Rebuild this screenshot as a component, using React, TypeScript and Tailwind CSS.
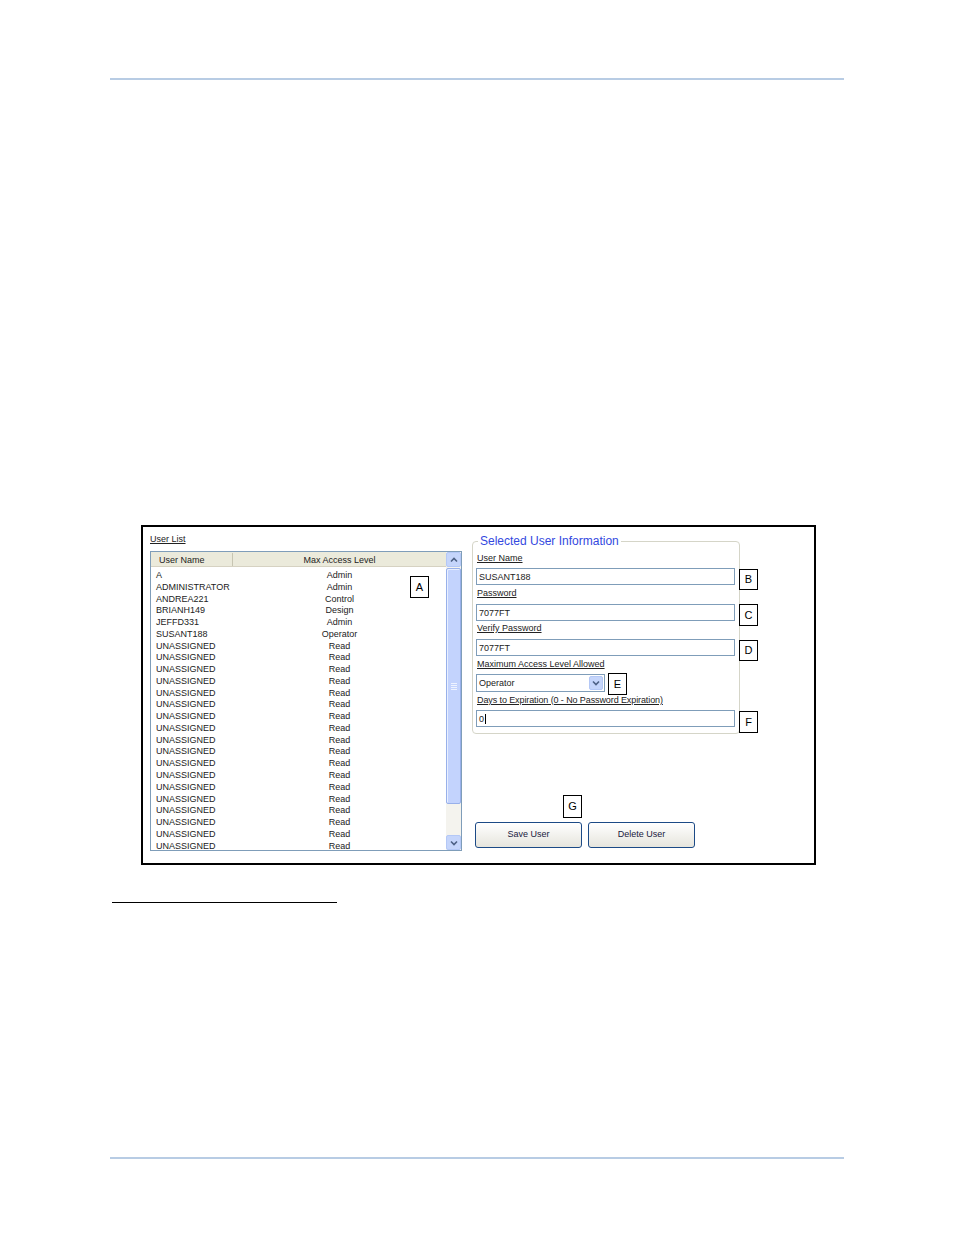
import React from "react";

const users: [string, string][] = [
  ["A", "Admin"],
  ["ADMINISTRATOR", "Admin"],
  ["ANDREA221", "Control"],
  ["BRIANH149", "Design"],
  ["JEFFD331", "Admin"],
  ["SUSANT188", "Operator"],
  ...Array.from({ length: 18 }, () => ["UNASSIGNED", "Read"] as [string, string]),
];

function Chevron({ up = false }: { up?: boolean }) {
  return (
    <svg width="8" height="6" viewBox="0 0 8 6" className="block">
      <path
        d={up ? "M1 4.5 L4 1.5 L7 4.5" : "M1 1.5 L4 4.5 L7 1.5"}
        fill="none"
        stroke="#4d6185"
        strokeWidth="1.6"
      />
    </svg>
  );
}

function Callout({ letter, cls }: { letter: string; cls: string }) {
  return (
    <div
      className={`absolute flex items-center justify-center border border-black bg-white text-[11px] text-black ${cls}`}
    >
      {letter}
    </div>
  );
}

function Field({ value, caret = false }: { value: string; caret?: boolean }) {
  return (
    <div className="flex h-[17px] w-[259px] items-center border border-[#7f9db9] bg-white pl-[2px] text-[9px] leading-[12px] text-[#222222]">
      {value}
      {caret && <span className="ml-[1px] inline-block h-[10px] w-[1px] bg-black" />}
    </div>
  );
}

function Label({ text, cls = "" }: { text: string; cls?: string }) {
  return (
    <div className={`h-[12px] pl-[1px] text-[9px] leading-[12px] text-[#222222] underline ${cls}`}>
      {text}
    </div>
  );
}

export default function App() {
  return (
    <div
      className="flex h-[1235px] w-[954px] flex-col bg-white"
      style={{ fontFamily: '"Liberation Sans", Arial, sans-serif' }}
    >
      <div className="ml-[110px] mt-[78px] h-[2px] w-[734px] bg-[#b8cce4]" />

      <div className="relative ml-[141px] mt-[445px] flex h-[340px] w-[675px] border-2 border-black">
        {/* Left: user list */}
        <div className="ml-[7px] flex w-[312px] flex-col pt-[6px]">
          <div className="h-[12px] text-[9px] leading-[12px] text-[#222222] underline">User List</div>
          <div className="mt-[6px] flex h-[300px] border border-[#7f9db9] bg-white">
            <div className="flex min-w-0 flex-1 flex-col overflow-hidden">
              <div className="flex h-[15px] shrink-0 items-center border-b border-[#d6d2c2] bg-[#ebeadb] pt-[1px] text-[9px] leading-[12px] text-[#222222]">
                <div className="flex h-full w-[82px] items-center border-r border-[#c7c5b2] pl-[8px]">User Name</div>
                <div className="flex-1 text-center">Max Access Level</div>
              </div>
              <div className="flex flex-col pt-[3px]">
                {users.map(([name, level], i) => (
                  <div key={i} className="flex h-[11.78px] shrink-0 text-[9px] leading-[11.78px] text-[#222222]">
                    <div className="w-[82px] pl-[5px]">{name}</div>
                    <div className="flex-1 text-center">{level}</div>
                  </div>
                ))}
              </div>
            </div>
            {/* scrollbar */}
            <div className="flex w-[15px] flex-col bg-[#f4f3ee]">
              <div className="flex h-[15px] items-center justify-center rounded-[2px] border border-[#b4c8f6] bg-[#c5d5fb]">
                <Chevron up />
              </div>
              <div className="mt-[1px] flex h-[236px] flex-col items-center justify-center rounded-[2px] border border-[#98b0ea] bg-[#c3d3fd] shadow-[inset_1px_1px_0_#e8efff]">
                <div className="flex flex-col gap-[1px]">
                  <div className="h-[1px] w-[6px] bg-[#eef3ff]" />
                  <div className="h-[1px] w-[6px] bg-[#eef3ff]" />
                  <div className="h-[1px] w-[6px] bg-[#eef3ff]" />
                  <div className="h-[1px] w-[6px] bg-[#eef3ff]" />
                </div>
              </div>
              <div className="flex-1" />
              <div className="flex h-[15px] items-center justify-center rounded-[2px] border border-[#b4c8f6] bg-[#c5d5fb]">
                <Chevron />
              </div>
            </div>
          </div>
        </div>

        {/* Right: selected user info */}
        <div className="ml-[10px] flex flex-col pt-[14px]">
          <div className="relative w-[268px] rounded-[4px] border border-[#d5d5c8] pb-[6px] pl-[3px] pt-[10px]">
            <div className="absolute left-[5px] top-[-8px] bg-white px-[2px] text-[12px] leading-[14px] text-[#3348e0]">
              Selected User Information
            </div>
            <Label text="User Name" />
            <div className="mt-[4px]"><Field value="SUSANT188" /></div>
            <Label text="Password" cls="mt-[2px]" />
            <div className="mt-[5px]"><Field value="7077FT" /></div>
            <Label text="Verify Password" cls="mt-[1px]" />
            <div className="mt-[5px]"><Field value="7077FT" /></div>
            <Label text="Maximum Access Level Allowed" cls="mt-[2px]" />
            <div className="mt-[4px] flex h-[18px] w-[129px] items-center justify-between border border-[#7f9db9] bg-white pl-[2px] pr-[1px] text-[9px] leading-[12px] text-[#222222]">
              <span>Operator</span>
              <div className="flex h-[14px] w-[14px] items-center justify-center rounded-[2px] border border-[#b4c8f6] bg-[#c5d5fb]">
                <Chevron />
              </div>
            </div>
            <Label text="Days to Expiration (0 - No Password Expiration)" cls="mt-[2px] tracking-[-0.1px]" />
            <div className="mt-[4px]"><Field value="0" caret /></div>
          </div>

          <div className="ml-[3px] mt-[88px] flex gap-[6px]">
            <div className="flex h-[26px] w-[107px] items-center justify-center rounded-[3px] border border-[#1c4a86] bg-gradient-to-b from-white to-[#e6e5dd] text-[9px] text-[#202040]">
              Save User
            </div>
            <div className="flex h-[26px] w-[107px] items-center justify-center rounded-[3px] border border-[#1c4a86] bg-gradient-to-b from-white to-[#e6e5dd] text-[9px] text-[#202040]">
              Delete User
            </div>
          </div>
        </div>

        <Callout letter="A" cls="left-[267px] top-[49px] h-[22px] w-[19px]" />
        <Callout letter="B" cls="left-[596px] top-[42px] h-[21px] w-[19px]" />
        <Callout letter="C" cls="left-[596px] top-[77px] h-[22px] w-[19px]" />
        <Callout letter="D" cls="left-[596px] top-[113px] h-[21px] w-[19px]" />
        <Callout letter="E" cls="left-[465px] top-[146px] h-[22px] w-[19px]" />
        <Callout letter="F" cls="left-[596px] top-[184px] h-[22px] w-[19px]" />
        <Callout letter="G" cls="left-[420px] top-[268px] h-[23px] w-[19px]" />
      </div>

      <div className="ml-[112px] mt-[37px] h-[1px] w-[225px] bg-black" />
      <div className="ml-[110px] mt-[254px] h-[2px] w-[734px] bg-[#b8cce4]" />
    </div>
  );
}
